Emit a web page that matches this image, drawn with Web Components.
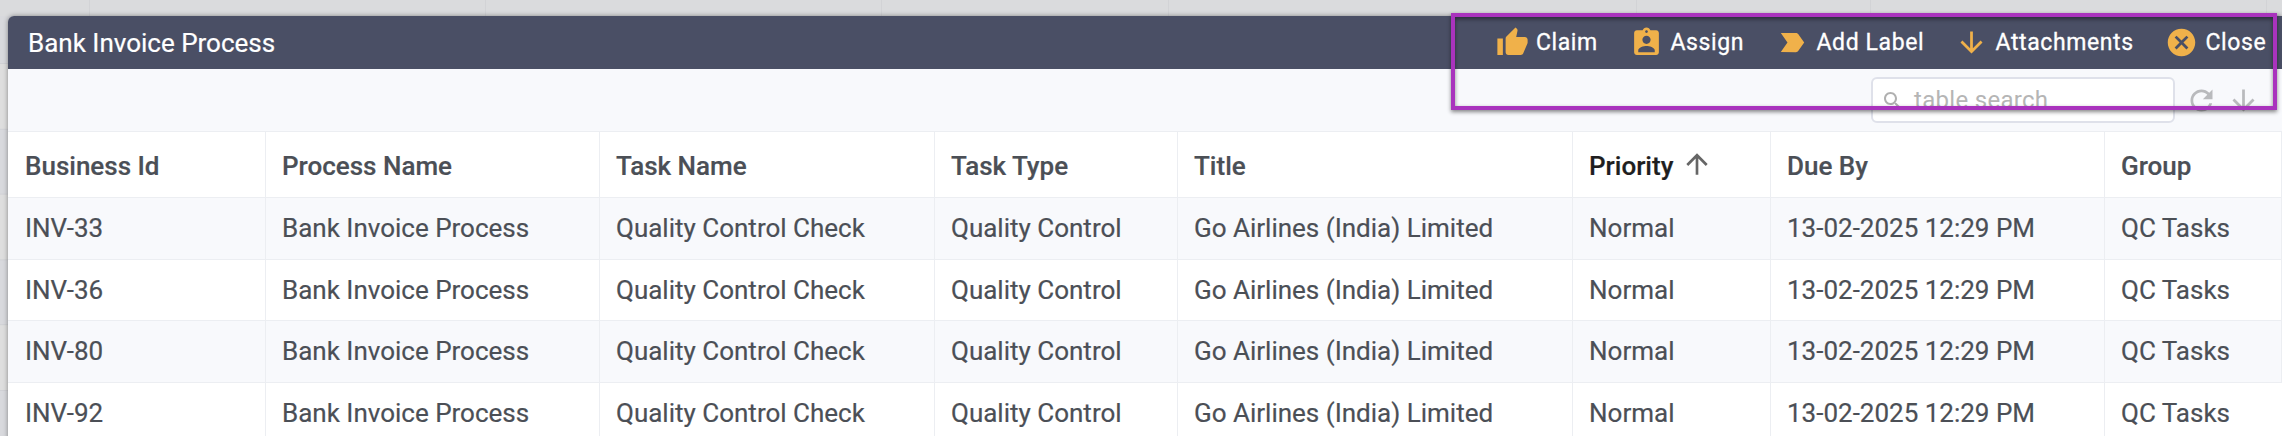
<!DOCTYPE html>
<html lang="en"><head><meta charset="utf-8"><title>Bank Invoice Process</title>
<style>html,body{margin:0;height:100%;overflow:hidden;background:#fff}body{font-family:Roboto,sans-serif}</style></head>
<body><task-page></task-page>
<script>
const define=(name,html,init)=>customElements.define(name,class extends HTMLElement{
  connectedCallback(){
    if(this.shadowRoot)return;
    const t=document.createElement('template');t.innerHTML=html;
    this.attachShadow({mode:'open'});
    const content=t.content.cloneNode(true);
    if(init)init(this,content);
    this.shadowRoot.append(content);
  }
});
const icons={
  claim:'<path d="M1 21h4V9H1v12zm22-11c0-1.100-.9-2-2-2h-6.310l.95-4.570.03-.32c0-.41-.17-.79-.44-1.060L14.170 1 7.590 7.590C7.220 7.950 7 8.450 7 9v10c0 1.100.9 2 2 2h9c.83 0 1.540-.5 1.840-1.220l3.020-7.050c.09-.23.14-.47.14-.73v-2z"/>',
  assign:'<path d="M19 3h-4.180C14.400 1.840 13.300 1 12 1c-1.300 0-2.400.84-2.820 2H5c-1.100 0-2 .9-2 2v14c0 1.100.9 2 2 2h14c1.100 0 2-.9 2-2V5c0-1.100-.9-2-2-2zm-7 0c.55 0 1 .45 1 1s-.45 1-1 1-1-.45-1-1 .45-1 1-1zm0 4c1.660 0 3 1.340 3 3s-1.340 3-3 3-3-1.340-3-3 1.340-3 3-3zm6 12H6v-1.400c0-2 4-3.100 6-3.100s6 1.100 6 3.100V19z"/>',
  label:'<path d="M3.500 18.990l11 .01c.67 0 1.270-.33 1.630-.84L20.500 12l-4.370-6.160c-.36-.51-.96-.84-1.630-.84l-11 .01L8.340 12 3.500 18.990z"/>',
  down:'<path d="M20 12l-1.410-1.410L13 16.170V4h-2v12.170l-5.580-5.590L4 12l8 8 8-8z"/>',
  up:'<path d="M4 12l1.410 1.410L11 7.830V20h2V7.830l5.580 5.590L20 12l-8-8-8 8z"/>',
  close:'<path d="M12 2C6.470 2 2 6.470 2 12s4.470 10 10 10 10-4.470 10-10S17.530 2 12 2zm5 13.590L15.590 17 12 13.410 8.410 17 7 15.590 10.590 12 7 8.410 8.410 7 12 10.590 15.590 7 17 8.410 13.410 12 17 15.590z"/>',
  search:'<path d="M15.500 14h-.79l-.28-.27C15.410 12.590 16 11.110 16 9.500 16 5.910 13.090 3 9.500 3S3 5.910 3 9.500 5.910 16 9.500 16c1.610 0 3.090-.59 4.230-1.570l.27.28v.79l5 4.990L20.490 19l-4.990-5zm-6 0C7.010 14 5 11.990 5 9.500S7.010 5 9.500 5 14 7.010 14 9.500 11.990 14 9.500 14z"/>',
  refresh:'<path d="M17.650 6.350C16.200 4.900 14.210 4 12 4c-4.420 0-7.990 3.580-7.990 8s3.570 8 7.990 8c3.730 0 6.840-2.550 7.730-6h-2.080c-.82 2.330-3.040 4-5.650 4-3.310 0-6-2.690-6-6s2.690-6 6-6c1.660 0 3.140.69 4.220 1.780L13 11h7V4l-2.350 2.350z"/>'
};
define('task-icon',`<style>:host{display:block;flex:none}svg{display:block;width:100%;height:100%;fill:currentColor}</style><svg viewBox="0 0 24 24"></svg>`,
  (el,r)=>{r.querySelector('svg').innerHTML=icons[el.getAttribute('name')]});
define('action-button',`<style>:host{display:flex;align-items:center;color:#fff;font-size:23px;-webkit-text-stroke:.3px #fff;letter-spacing:.6px;line-height:53px;white-space:nowrap;flex:none}
task-icon{color:#f0b14a;width:33px;height:33px;margin-right:7.5px}</style><task-icon></task-icon><span><slot></slot></span>`,
  (el,r)=>r.querySelector('task-icon').setAttribute('name',el.getAttribute('icon')));
define('title-bar',`<style>:host{display:flex;height:53px;background:#4a4f65;border-radius:6px 0 0 0;color:#fff;padding-left:20px;box-sizing:border-box}
.title{font-size:26px;line-height:54px;width:1467.5px;flex:none;-webkit-text-stroke:.2px #fff}</style>
<div class="title">Bank Invoice Process</div>
<action-button icon="claim" style="width:134.5px">Claim</action-button>
<action-button icon="assign" style="width:146px">Assign</action-button>
<action-button icon="label" style="width:179px">Add Label</action-button>
<action-button icon="down" style="width:210px">Attachments</action-button>
<action-button icon="close">Close</action-button>`);
define('table-tools',`<style>:host{display:flex;height:62px;background:#f8f9fc;align-items:flex-start;justify-content:flex-end;padding:8px 22px 0 0;box-sizing:border-box}
.box{display:flex;align-items:center;width:304px;height:46px;box-sizing:border-box;border:2px solid #dfe1ea;border-radius:6px;background:#fff;padding-left:8px;font-size:24px;letter-spacing:.3px;line-height:42px;color:#b5b5b5}
.box task-icon{width:24px;height:24px;margin:2px 9px 0 0;color:#b0b0b0}
.t{width:33px;height:33px;margin:6.5px 0 0 9.5px;color:#b9babd}</style>
<div class="box"><task-icon name="search"></task-icon><span>table search</span></div>
<task-icon class="t" name="refresh"></task-icon><task-icon class="t" name="down"></task-icon>`);
define('task-cell',`<style>:host{display:flex;align-items:center;box-sizing:border-box;padding:0 0 1px 16px;white-space:nowrap;border-right:1px solid #eceef2;border-bottom:1px solid #eceef2}
:host(:last-child){border-right:0}</style><slot></slot>`);
define('task-table',`<style>:host{display:grid;grid-template-columns:258px 334px 335px 243px 395px 198px 334px 1fr;grid-template-rows:66px 62px 61px 62px 62px;border-top:1px solid #eceef2;background:#fff;font-size:26px;color:#4b4f56;-webkit-text-stroke:.2px currentColor}
task-cell:nth-of-type(8n+1){padding-left:17px}
.h{font-weight:500;padding-top:3px;padding-bottom:0}.odd{background:#f8f9fc}.sorted{color:#1e1e20}.sorted task-icon{width:32px;height:32px;color:#666;margin:-4px 0 0 8px}</style>`,
  (el,r)=>{
    const add=(cls,html)=>{const c=document.createElement('task-cell');c.className=cls;c.innerHTML=html;r.append(c)};
    ['Business Id','Process Name','Task Name','Task Type','Title','Priority','Due By','Group'].forEach(t=>t==='Priority'?add('h sorted',t+'<task-icon name="up"></task-icon>'):add('h',t));
    ['INV-33','INV-36','INV-80','INV-92'].forEach((id,i)=>[id,'Bank Invoice Process','Quality Control Check','Quality Control','Go Airlines (India) Limited','Normal','13-02-2025 12:29 PM','QC Tasks'].forEach(t=>add(i%2?'even':'odd',t)));
  });
const seams=[89,485,881,1168,1636,1870,2266].map(x=>`linear-gradient(#d2d3d6,#d2d3d6) ${x}px 0/1px 16px no-repeat`).join(',');
define('task-page',`<style>:host{display:block;position:relative;width:2282px;height:436px;overflow:hidden;box-sizing:border-box;padding:16px 0 0 8px;
background:${seams},linear-gradient(#dadbdd,#dadbdd) 0 0/100% 16px no-repeat,repeating-linear-gradient(#d0d1d5 0 1px,#dedede 1px 65.3px,#d0d1d5 65.3px 66.3px,#d8d9dd 66.3px 130.6px) 0 63px/100% 130.6px}
.panel{box-shadow:0 0 5px #0006;border-radius:6px 0 0 0}
.mark{position:absolute;left:1451px;top:13px;width:826px;height:97px;box-sizing:border-box;border:4px solid #a933bd;box-shadow:0 2px 4px #0007,inset 0 2px 4px #0007}</style>
<div class="panel"><title-bar></title-bar><table-tools></table-tools><task-table></task-table></div><div class="mark"></div>`);
</script></body></html>
